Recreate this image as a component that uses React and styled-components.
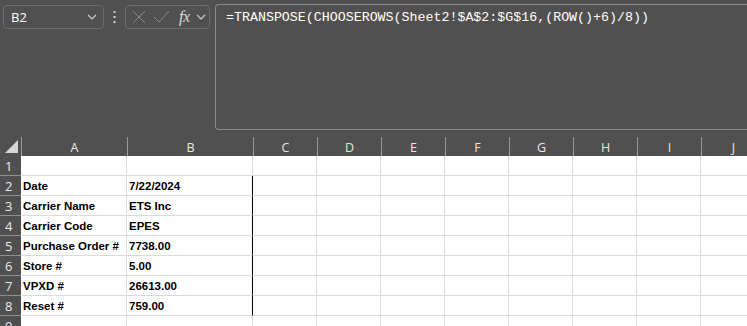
import React from "react";
import styled, { createGlobalStyle } from "styled-components";

const GlobalStyle = createGlobalStyle`
  body {
    margin: 0;
    background: #505050;
    overflow: hidden;
  }
`;

const Page = styled.div`
  width: 747px;
  height: 326px;
  overflow: hidden;
  background: #505050;
  font-family: "Liberation Sans", Arial, sans-serif;
`;

const Toolbar = styled.div`
  display: flex;
  align-items: flex-start;
  height: 137px;
  padding: 4px 0 0 3px;
  box-sizing: border-box;
`;

const NameBox = styled.div`
  margin-top: 1px;
  width: 101px;
  height: 24px;
  box-sizing: border-box;
  border: 1px solid #6c6c6c;
  border-radius: 4px;
  display: flex;
  align-items: center;
  justify-content: space-between;
  padding: 0 6px 0 7px;
  color: #ffffff;
  font-family: "Open Sans", "Liberation Sans", sans-serif;
  font-size: 13px;
`;

const Dots = styled.div`
  width: 21px;
  display: flex;
  justify-content: center;
  padding-top: 7px;
`;

const FnBox = styled.div`
  margin-top: 1px;
  width: 85px;
  height: 24px;
  box-sizing: border-box;
  border: 1px solid #6c6c6c;
  border-radius: 4px;
  display: flex;
  align-items: center;
  padding: 0 3px 0 5px;
  gap: 6px;
`;

const Fx = styled.span`
  font-family: "Liberation Serif", serif;
  font-style: italic;
  font-size: 16px;
  color: #dcdcdc;
  margin-left: 3px;
  letter-spacing: -0.5px;
`;

const FormulaBox = styled.div`
  margin-left: 5px;
  flex: 1;
  height: 126px;
  box-sizing: border-box;
  border: 1px solid #8c8c8c;
  border-right: none;
  border-radius: 4px 0 0 4px;
  padding: 3px 0 0 10px;
  color: #ffffff;
  font-family: "Liberation Mono", "DejaVu Sans Mono", monospace;
  font-size: 13.3px;
  line-height: 20px;
  white-space: nowrap;
`;

const Grid = styled.div`
  display: grid;
  grid-template-columns: 21px 106px 126px 64px 64px 64px 64px 64px 64px 64px 64px;
  grid-auto-rows: 20px;
  grid-template-rows: 19px;
`;

const Corner = styled.div`
  background: #505050;
  display: flex;
  align-items: flex-end;
  justify-content: flex-end;
  padding: 0 3px 3px 0;
  box-sizing: border-box;
`;

const ColHead = styled.div`
  background: #505050;
  color: #e6e6e6;
  font-family: "Open Sans", "Liberation Sans", sans-serif;
  font-size: 12.5px;
  display: flex;
  align-items: center;
  justify-content: center;
  box-sizing: border-box;
  border-left: 1px solid #9a9a9a;
  padding-top: 1px;
`;

const RowHead = styled.div`
  background: #505050;
  color: #eaeaea;
  font-family: "Open Sans", "Liberation Sans", sans-serif;
  font-size: 13px;
  display: flex;
  align-items: center;
  padding-left: 5px;
  box-sizing: border-box;
  border-bottom: 1px solid #8e8e8e;
`;

const Cell = styled.div`
  background: #ffffff;
  box-sizing: border-box;
  border-right: 1px solid ${(p) => (p.$thick ? "#000000" : "#dadada")};
  border-bottom: 1px solid #dadada;
  color: #000000;
  font-weight: bold;
  font-size: 11.5px;
  line-height: 20px;
  padding-left: 2px;
  white-space: nowrap;
  overflow: hidden;
`;

const COLS = ["A", "B", "C", "D", "E", "F", "G", "H", "I", "J"];

const DATA = [
  ["", ""],
  ["Date", "7/22/2024"],
  ["Carrier Name", "ETS Inc"],
  ["Carrier Code", "EPES"],
  ["Purchase Order #", "7738.00"],
  ["Store #", "5.00"],
  ["VPXD #", "26613.00"],
  ["Reset #", "759.00"],
  ["", ""],
];

const Chevron = ({ color = "#cfcfcf" }) => (
  <svg width="10" height="6" viewBox="0 0 10 6">
    <path d="M1 1 L5 5 L9 1" fill="none" stroke={color} strokeWidth="1.1" />
  </svg>
);

const App = () => {
  return (
    <Page>
      <GlobalStyle />
      <Toolbar>
        <NameBox>
          <span>B2</span>
          <Chevron />
        </NameBox>
        <Dots>
          <svg width="3" height="12" viewBox="0 0 3 12">
            <rect x="0.5" y="0" width="2" height="2" fill="#cfcfcf" />
            <rect x="0.5" y="5" width="2" height="2" fill="#cfcfcf" />
            <rect x="0.5" y="10" width="2" height="2" fill="#cfcfcf" />
          </svg>
        </Dots>
        <FnBox>
          <svg width="16" height="14" viewBox="0 0 16 14">
            <path d="M2 1 L14 13 M14 1 L2 13" stroke="#8a8a8a" strokeWidth="1" fill="none" />
          </svg>
          <svg width="17" height="14" viewBox="0 0 17 14">
            <path d="M1 7 L6 12 L16 1" stroke="#8a8a8a" strokeWidth="1" fill="none" />
          </svg>
          <Fx>fx</Fx>
          <Chevron />
        </FnBox>
        <FormulaBox>=TRANSPOSE(CHOOSEROWS(Sheet2!$A$2:$G$16,(ROW()+6)/8))</FormulaBox>
      </Toolbar>
      <Grid>
        <Corner>
          <svg width="13" height="13" viewBox="0 0 13 13">
            <polygon points="13,0 13,13 0,13" fill="#d6d6d6" />
          </svg>
        </Corner>
        {COLS.map((c) => (
          <ColHead key={c}>{c}</ColHead>
        ))}
        {DATA.map((row, r) => (
          <React.Fragment key={r}>
            <RowHead>{r + 1}</RowHead>
            <Cell>{row[0]}</Cell>
            <Cell $thick={r >= 1 && r <= 7}>{row[1]}</Cell>
            {COLS.slice(2).map((c) => (
              <Cell key={c} />
            ))}
          </React.Fragment>
        ))}
      </Grid>
    </Page>
  );
};

export default App;
